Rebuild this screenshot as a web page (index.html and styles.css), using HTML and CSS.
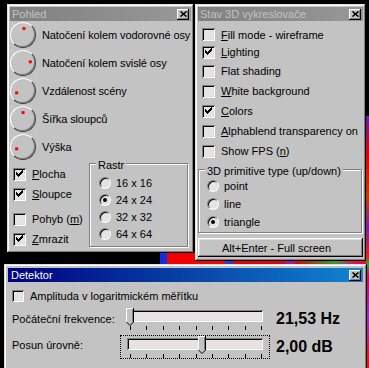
FILE: index.html
```html
<!DOCTYPE html>
<html lang="cs">
  <head>
    <meta charset="UTF-8" />
    <title>Pohled / Stav 3D / Detektor</title>
    <link rel="stylesheet" href="styles.css">
  </head>
  <body>
    <div class="desktop">
      <!-- bits of the 3D scene showing between the windows -->
      <div class="scrap scrap-red"></div>
      <div class="scrap scrap-strip"></div>
      <div class="scrap scrap-edge"></div>

      <div class="window pohled">
        <div class="titlebar">
          <span class="title">Pohled</span>
          <span class="close"><svg width="7" height="6" viewBox="0 0 7 6"><path d="M0.5 0.5L6.5 5.5M6.5 0.5L0.5 5.5" stroke="#000" stroke-width="1.6"/></svg></span>
        </div>
        <div class="pohled-body">
          <div class="dial-row"><span class="dial"><i class="dot" style="--a: 4deg"></i></span><span class="dial-label">Natočení kolem vodorovné osy</span></div>
          <div class="dial-row"><span class="dial"><i class="dot" style="--a: 76deg"></i></span><span class="dial-label">Natočení kolem svislé osy</span></div>
          <div class="dial-row"><span class="dial"><i class="dot" style="--a: 259deg"></i></span><span class="dial-label">Vzdálenost scény</span></div>
          <div class="dial-row"><span class="dial"><i class="dot" style="--a: 356deg"></i></span><span class="dial-label">Šířka sloupců</span></div>
          <div class="dial-row"><span class="dial"><i class="dot" style="--a: 259deg"></i></span><span class="dial-label">Výška</span></div>

          <div class="pohled-bottom">
            <div class="checks">
              <div class="check"><span class="box on"></span><span><u>P</u>locha</span></div>
              <div class="check"><span class="box on"></span><span><u>S</u>loupce</span></div>
              <div class="check gap"><span class="box"></span><span>Pohyb (<u>m</u>)</span></div>
              <div class="check"><span class="box on"></span><span><u>Z</u>mrazit</span></div>
            </div>
            <div class="group rastr">
              <span class="legend">Rastr</span>
              <div class="radio"><span class="dot-r"></span><span>16 x 16</span></div>
              <div class="radio"><span class="dot-r on"></span><span>24 x 24</span></div>
              <div class="radio"><span class="dot-r"></span><span>32 x 32</span></div>
              <div class="radio"><span class="dot-r"></span><span>64 x 64</span></div>
            </div>
          </div>
        </div>
      </div>

      <div class="window stav">
        <div class="titlebar">
          <span class="title">Stav 3D vykreslovače</span>
          <span class="close"><svg width="7" height="6" viewBox="0 0 7 6"><path d="M0.5 0.5L6.5 5.5M6.5 0.5L0.5 5.5" stroke="#000" stroke-width="1.6"/></svg></span>
        </div>
        <div class="stav-body">
          <div class="check r17"><span class="box"></span><span><u>F</u>ill mode - wireframe</span></div>
          <div class="check r18"><span class="box on"></span><span><u>L</u>ighting</span></div>
          <div class="check"><span class="box"></span><span>Flat shading</span></div>
          <div class="check"><span class="box"></span><span><u>W</u>hite background</span></div>
          <div class="check"><span class="box on"></span><span><u>C</u>olors</span></div>
          <div class="check"><span class="box"></span><span><u>A</u>lphablend transparency on</span></div>
          <div class="check"><span class="box"></span><span>Show FPS (<u>n</u>)</span></div>

          <div class="group primitive">
            <span class="legend">3D primitive type (up/down)</span>
            <div class="radio"><span class="dot-r"></span><span>point</span></div>
            <div class="radio"><span class="dot-r"></span><span>line</span></div>
            <div class="radio"><span class="dot-r on"></span><span>triangle</span></div>
          </div>

          <div class="button">Alt+Enter - Full screen</div>
        </div>
      </div>

      <div class="window detektor">
        <div class="titlebar active">
          <span class="title">Detektor</span>
          <span class="close"><svg width="7" height="6" viewBox="0 0 7 6"><path d="M0.5 0.5L6.5 5.5M6.5 0.5L0.5 5.5" stroke="#000" stroke-width="1.6"/></svg></span>
        </div>
        <div class="detektor-body">
          <div class="check amp"><span class="box small"></span><span>Amplituda v logaritmickém měřítku</span></div>

          <div class="sliders">
            <span class="lbl">Počáteční frekvence:</span>
            <div class="slider">
              <div class="track"></div>
              <div class="ticks"><i></i><i></i><i></i><i></i><i></i><i></i><i></i><i></i><i></i></div>
              <svg class="thumb" style="left: 6px" width="8" height="18" viewBox="0 0 8 18">
                <path d="M0 0H8V14L4 18L0 14Z" fill="#c3c3c3"/>
                <path d="M0.5 14V0.5H7" stroke="#fff" fill="none"/>
                <path d="M7.5 0V14L4 17.5L0.5 14" stroke="#000" fill="none"/>
                <path d="M6.5 1V13.5" stroke="#808080" fill="none"/>
              </svg>
            </div>
            <span class="val">21,53 Hz</span>

            <span class="lbl up">Posun úrovně:</span>
            <div class="slider focus">
              <div class="track"></div>
              <div class="ticks"><i></i><i></i><i></i><i></i><i></i><i></i><i></i><i></i><i></i></div>
              <svg class="thumb" style="left: 78px" width="8" height="18" viewBox="0 0 8 18">
                <path d="M0 0H8V14L4 18L0 14Z" fill="#c3c3c3"/>
                <path d="M0.5 14V0.5H7" stroke="#fff" fill="none"/>
                <path d="M7.5 0V14L4 17.5L0.5 14" stroke="#000" fill="none"/>
                <path d="M6.5 1V13.5" stroke="#808080" fill="none"/>
              </svg>
            </div>
            <span class="val">2,00 dB</span>
          </div>
        </div>
      </div>
    </div>
  </body>
</html>
```

FILE: styles.css
```css
body {
  margin: 0;
  background: #000;
  font-family: "Liberation Sans", Arial, sans-serif;
  font-size: 11px;
  color: #000;
}

.desktop {
  position: relative;
  width: 369px;
  height: 368px;
  overflow: hidden;
}

/* scene leftovers */
.scrap {
  position: absolute;
}

.scrap-red {
  left: 160px;
  top: 253px;
  width: 37px;
  height: 12px;
  background: linear-gradient(90deg, #1030e0 0, #1030e0 7px, #f20000 7px);
}

.scrap-strip {
  left: 195px;
  top: 260px;
  width: 174px;
  height: 5px;
  background: linear-gradient(90deg, #f00 0, #f00 30px, #2040d0 30px, #2040d0 38px, #e00010 38px, #e00010 90px, #9020a0 90px, #9020a0 100px, #e00000 100px, #30a030 140px, #e01060 160px, #f00 174px);
}

.scrap-edge {
  left: 366px;
  top: 116px;
  width: 3px;
  height: 252px;
  background: linear-gradient(180deg, #6020a0 0, #e00000 40px, #c04000 80px, #8020a0 110px, #e02020 140px, #30a040 148px, #e00060 160px, #a030c0 200px, #f01010 252px);
}

/* windows */
.window {
  position: absolute;
  box-sizing: border-box;
  display: flex;
  flex-direction: column;
  padding: 3px;
  background: #c3c3c3;
  box-shadow: inset -1px -1px #000, inset 1px 1px #dfdfdf, inset -2px -2px #808080, inset 2px 2px #fff;
}

.pohled {
  left: 7px;
  top: 4px;
  width: 187px;
  height: 249px;
}

.stav {
  left: 195px;
  top: 4px;
  width: 171px;
  height: 257px;
}

.detektor {
  left: 4px;
  top: 264px;
  width: 363px;
  height: 110px;
  padding: 4px;
}

.titlebar {
  height: 14px;
  flex-shrink: 0;
  display: flex;
  align-items: center;
  justify-content: space-between;
  padding: 0 2px 0 2px;
  background: linear-gradient(90deg, #808080, #989898);
  color: #c3c3c3;
}

.titlebar.active {
  background: linear-gradient(90deg, #000080, #1084d0);
  color: #fff;
  padding-left: 3px;
}

.title {
  line-height: 14px;
}

.close {
  width: 12px;
  height: 11px;
  box-sizing: border-box;
  display: flex;
  align-items: center;
  justify-content: center;
  background: #c3c3c3;
  box-shadow: inset -1px -1px #000, inset 1px 1px #fff, inset -2px -2px #808080;
}

/* Pohled */
.pohled-body {
  display: flex;
  flex-direction: column;
}

.dial-row {
  height: 28px;
  display: flex;
  align-items: center;
  gap: 6px;
}

.dial-label {
  white-space: nowrap;
  letter-spacing: -0.1px;
}

.dial {
  position: relative;
  width: 26px;
  height: 26px;
  box-sizing: border-box;
  flex-shrink: 0;
  border-radius: 50%;
  border: 1px solid;
  border-color: #fff #404040 #404040 #fff;
  box-shadow: inset -1px -1px #808080;
}

.dot {
  position: absolute;
  left: 50%;
  top: 50%;
  width: 3px;
  height: 3px;
  margin: -1.5px 0 0 -1.5px;
  background: #f00;
  transform: rotate(var(--a)) translateY(-7px);
}

.pohled-bottom {
  display: flex;
  margin-top: 2px;
}

.checks {
  width: 79px;
  padding: 1px 0 0 3px;
  box-sizing: border-box;
}

.check {
  height: 20px;
  display: flex;
  align-items: center;
  gap: 6px;
  white-space: nowrap;
}

.check.gap {
  margin-top: 5px;
}

.check.r17 {
  height: 17px;
}

.check.r18 {
  height: 18px;
}

.box {
  position: relative;
  width: 13px;
  height: 13px;
  box-sizing: border-box;
  flex-shrink: 0;
  background: #e6e3e3;
  box-shadow: inset 1px 1px #808080, inset -1px -1px #fff, inset 2px 2px #000, inset -2px -2px #dfdfdf;
}

.box.small {
  width: 12px;
  height: 12px;
}

.box.on::after {
  content: "";
  position: absolute;
  left: 3px;
  top: 2px;
  width: 7px;
  height: 7px;
  background: url("data:image/svg+xml,%3Csvg xmlns='http://www.w3.org/2000/svg' width='7' height='7' viewBox='0 0 7 7' shape-rendering='crispEdges'%3E%3Cpath d='M6 0h1v3h-1v1h-1v1h-1v1h-1v1h-1v-1h-1v-1h-1v-3h1v1h1v1h1v-1h1v-1h1z' fill='%23000'/%3E%3C/svg%3E");
}

.group {
  position: relative;
  box-sizing: border-box;
  border: 1px solid #808080;
  box-shadow: inset 1px 1px #fff, 1px 1px #fff;
}

.legend {
  position: absolute;
  top: -5px;
  left: 6px;
  padding: 0 2px;
  line-height: 13px;
  white-space: nowrap;
  background: #c3c3c3;
}

.rastr {
  width: 99px;
  height: 84px;
  padding: 10px 0 0 9px;
}

.radio {
  height: 17px;
  display: flex;
  align-items: center;
  gap: 5px;
}

.dot-r {
  position: relative;
  width: 12px;
  height: 12px;
  box-sizing: border-box;
  flex-shrink: 0;
  border-radius: 50%;
  border: 1px solid;
  border-color: #808080 #fff #fff #808080;
  background: #e6e3e3;
  box-shadow: inset 1px 1px #000, inset -1px -1px #dfdfdf;
}

.dot-r.on::after {
  content: "";
  position: absolute;
  left: 3px;
  top: 3px;
  width: 4px;
  height: 4px;
  border-radius: 50%;
  background: #000;
}

/* Stav 3D */
.stav-body {
  display: flex;
  flex-direction: column;
  padding-top: 5px;
}

.stav-body .check {
  padding-left: 4px;
}

.primitive {
  width: 164px;
  height: 64px;
  margin-top: 8px;
  padding: 7px 0 0 8px;
}

.primitive .radio {
  height: 18px;
}

.button {
  height: 19px;
  margin-top: 5px;
  box-sizing: border-box;
  display: flex;
  align-items: center;
  justify-content: center;
  padding-right: 8px;
  box-shadow: inset -1px -1px #000, inset 1px 1px #fff, inset -2px -2px #808080, inset 2px 2px #dfdfdf;
}

/* Detektor */
.detektor-body {
  padding: 0 4px;
}

.check.amp {
  margin-top: 4px;
}

.sliders {
  display: grid;
  grid-template-columns: 108px 150px auto;
  grid-template-rows: 24px 24px;
  row-gap: 4px;
  align-items: center;
  margin-top: 1px;
}

.lbl {
  white-space: nowrap;
}

.lbl.up {
  margin-bottom: 4px;
}

.slider {
  position: relative;
  width: 150px;
  height: 24px;
  box-sizing: border-box;
  padding: 3px 7px 0 7px;
}

.slider.focus {
  outline: 1px dotted #000;
  outline-offset: -1px;
}

.track {
  height: 12px;
  box-sizing: border-box;
  background: #e6e3e3;
  box-shadow: inset 1px 1px #808080, inset -1px -1px #fff, inset 2px 2px #000, inset -2px -2px #dfdfdf;
}

.ticks {
  display: flex;
  justify-content: space-between;
  height: 4px;
  margin: 4px 1px 0 3px;
}

.ticks i {
  width: 1px;
  background: #000;
}

.thumb {
  position: absolute;
  top: 1px;
}

.val {
  margin-left: 6px;
  font-size: 16px;
  font-weight: bold;
}
```
